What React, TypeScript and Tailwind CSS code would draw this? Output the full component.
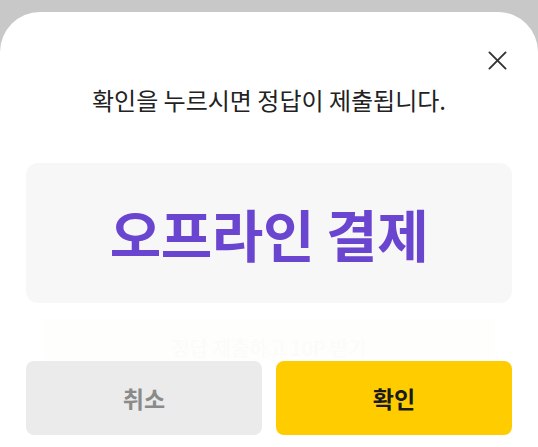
import React from 'react';

const App: React.FC = () => {
  return (
    <div className="w-[538px] h-[447px] bg-[#c8c8c8] pt-[12px] overflow-hidden [font-family:'Noto_Sans_CJK_KR',sans-serif]">
      <div className="h-full bg-white rounded-t-[40px] px-[26px] flex flex-col">
        {/* Header */}
        <div className="flex justify-end pt-[37px] pr-[4px]">
          <button className="w-[22px] h-[22px] flex items-center justify-center text-[#333333]">
            <svg width="19" height="19" viewBox="0 0 20 20" fill="none" stroke="currentColor" strokeWidth="2" strokeLinecap="round">
              <path d="M1.5 1.5 18.5 18.5" />
              <path d="M18.5 1.5 1.5 18.5" />
            </svg>
          </button>
        </div>
        <p className="mt-[12px] text-center text-[24px] leading-[34px] text-[#222222]">
          확인을 누르시면 정답이 제출됩니다.
        </p>

        {/* Answer */}
        <div className="mt-[46px] h-[140px] rounded-[12px] bg-[#f7f7f7] flex items-center justify-center">
          <span className="text-[56px] font-bold text-[#6a45cf] tracking-[-0.5px] leading-none">
            오프라인 결제
          </span>
        </div>

        {/* Faded hint */}
        <div className="mt-[15px] mx-[17px] h-[43px] bg-[#fefefd] flex items-end justify-center">
          <span className="text-[20px] leading-[26px] text-[#fbfbf9]">정답 제출하고 10P 받기</span>
        </div>

        {/* Buttons */}
        <div className="grid grid-cols-2 gap-[14px]">
          <button className="h-[74px] rounded-[8px] bg-[#ebebeb] text-[#8a8a8a] text-[23px] font-bold">
            취소
          </button>
          <button className="h-[74px] rounded-[8px] bg-[#ffcc00] text-[#1a1a1a] text-[23px] font-bold">
            확인
          </button>
        </div>
      </div>
    </div>
  );
};

export default App;
